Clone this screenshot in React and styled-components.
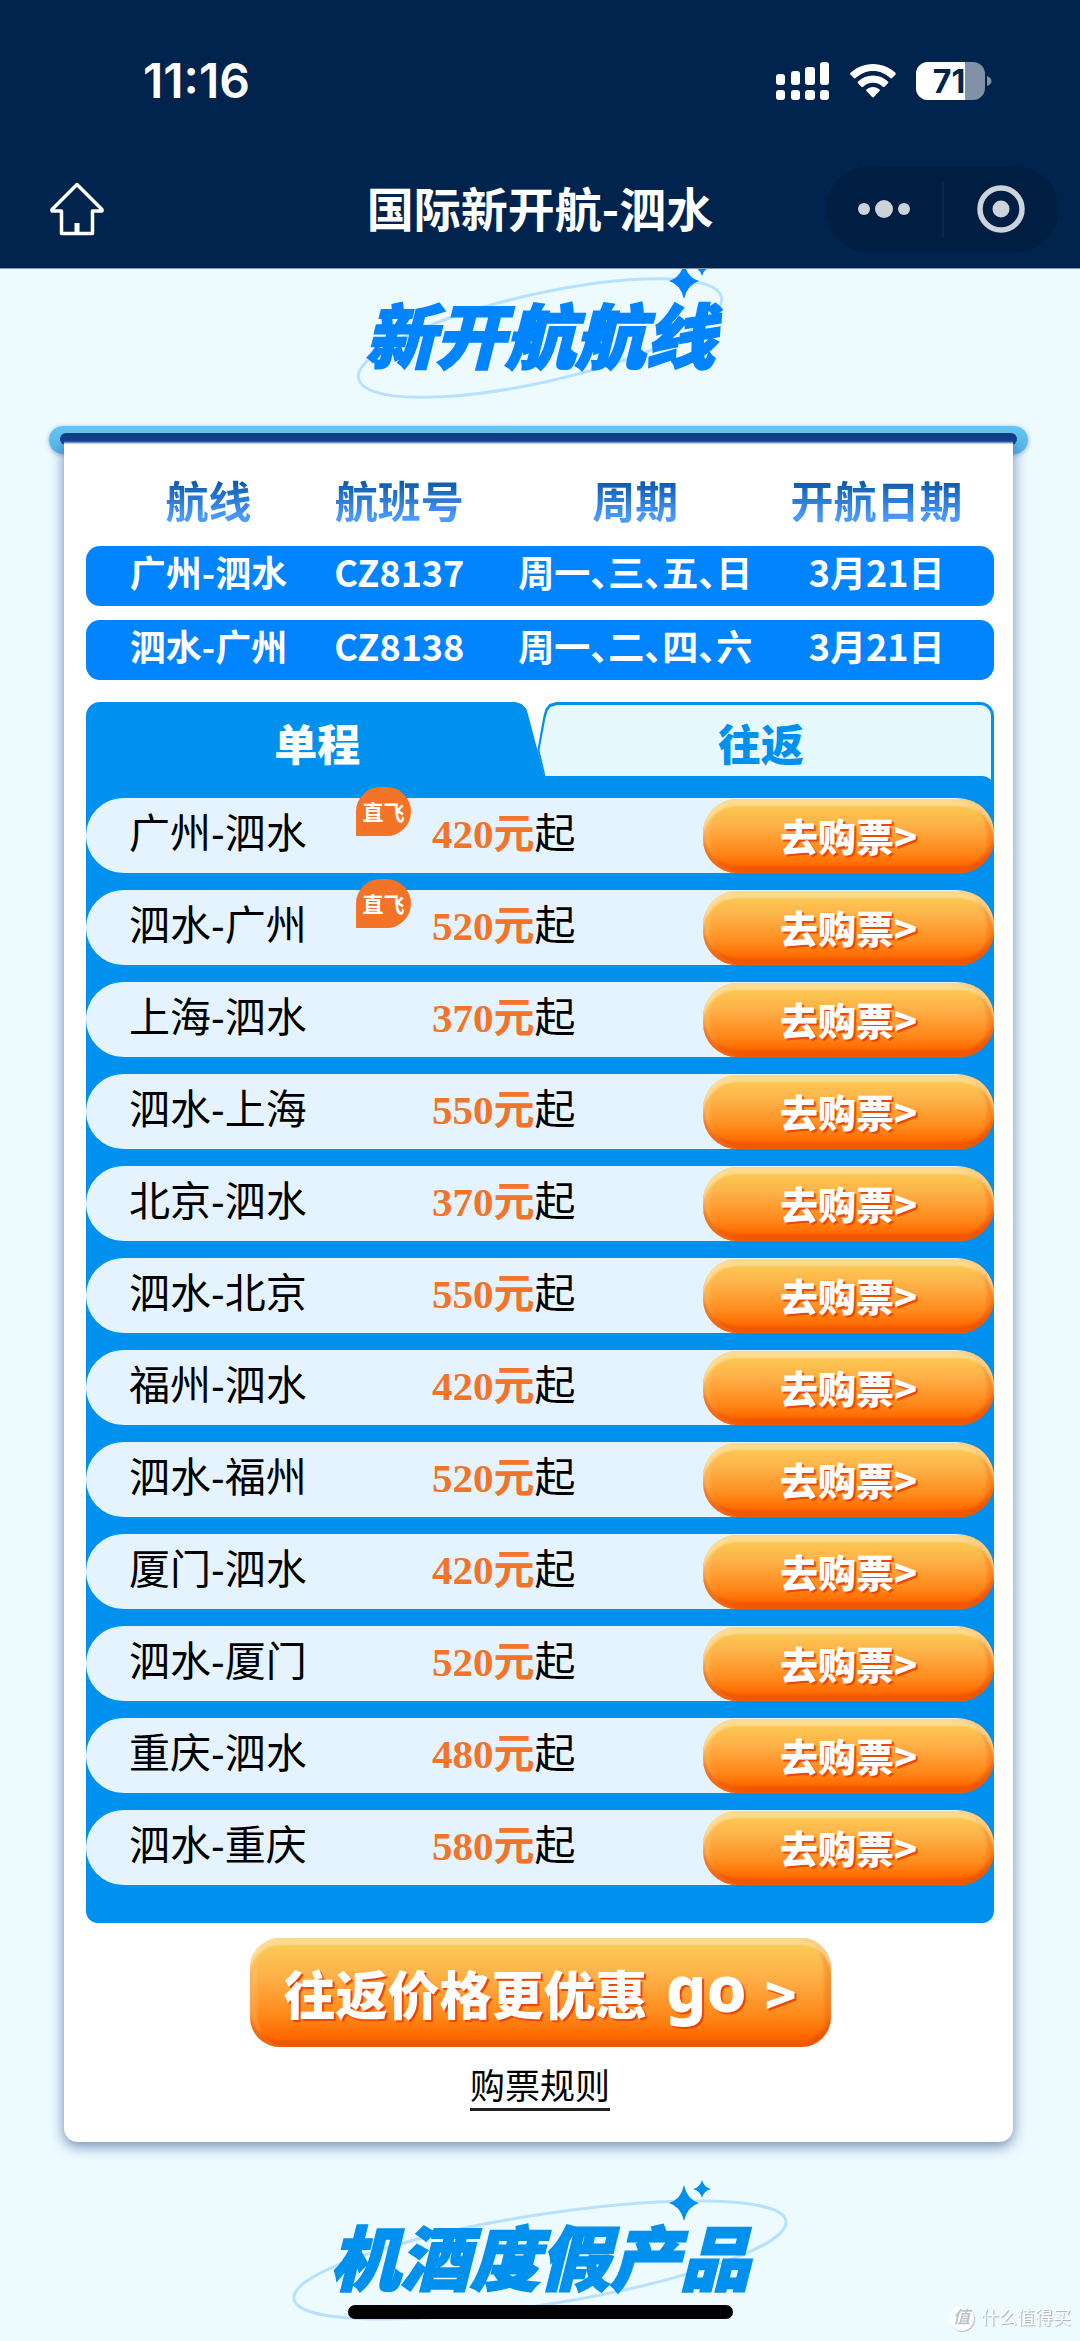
import React, {useState} from 'react';
import styled, {createGlobalStyle} from 'styled-components';

const GlobalStyle = createGlobalStyle`
  * {
    box-sizing: border-box;
  }
  body {
    margin: 0;
    background: #edfbff;
    font-family: "Liberation Sans", "Noto Sans CJK SC", sans-serif;
    color: #000;
  }
  button {
    border: 0;
    padding: 0;
    background: none;
    font-family: inherit;
    cursor: pointer;
  }
`;

const Header = styled.header`
  background: #00244d;
  color: #fff;
  border-bottom: 1px solid #8595ad;
`;

const StatusBar = styled.div`
  display: flex;
  align-items: center;
  justify-content: space-between;
  height: 161px;
  padding: 0 88px 0 143px;
`;

const Clock = styled.time`
  font: 600 48px/56px Inter, sans-serif;
`;

const StatusIcons = styled.div`
  display: flex;
  align-items: center;
  gap: 20px;
`;

const NavBar = styled.nav`
  display: grid;
  grid-template-columns: 1fr auto 1fr;
  align-items: center;
  height: 107px;
  padding: 0 20px 12px;
`;

const PageTitle = styled.h1`
  margin: 0;
  padding-bottom: 4px;
  font: 700 47px/60px "Noto Sans CJK SC", sans-serif;
`;

const HomeButton = styled.button`
  justify-self: start;
  display: flex;
  margin-left: 29px;
  color: #fff;
`;

const Capsule = styled.div`
  justify-self: end;
  display: flex;
  align-items: center;
  width: 235px;
  height: 88px;
  border-radius: 44px;
  background: #001e42;
  border: 1px solid #03264d;
  button {
    flex: 1;
    display: flex;
    justify-content: center;
  }
  button + button {
    border-left: 2px solid #08284f;
    height: 56px;
    align-items: center;
  }
`;

const Heading = styled.div`
  display: flex;
  justify-content: center;
  overflow: hidden;
  padding: ${p => p.$top}px 0 ${p => p.$bottom}px;
`;

const HeadingText = styled.h2`
  position: relative;
  isolation: isolate;
  margin: 0;
  padding-bottom: 6px;
  font: italic 900 70px/64px "Noto Sans CJK SC", sans-serif;
  color: ${p => p.$color};
  -webkit-text-stroke: 2px ${p => p.$color};
`;

const HeadingArt = styled.svg`
  position: absolute;
  z-index: -1;
  top: 50%;
  left: 50%;
  transform: translate(-50%, -50%);
`;

/* the bar the card hangs from */
const Roller = styled.div`
  margin: 0 52px 0 49px;
  height: 28px;
  padding: 7px 11px;
  border-radius: 14px;
  background: linear-gradient(#62c4f6, #58b4e8);
  box-shadow: 0 1px 4px rgba(60, 90, 180, 0.5);
  &::before {
    content: "";
    display: block;
    height: 12px;
    border-radius: 6px;
    background: linear-gradient(#0f3c7c, #15429a);
  }
`;

const Card = styled.main`
  position: relative;
  margin: -14px 67px 0 64px;
  padding: 0 19px 31px 22px;
  background: #fff;
  border-radius: 0 0 14px 14px;
  box-shadow: 0 4px 14px rgba(40, 70, 140, 0.65);
  clip-path: inset(0 -30px -30px -30px);
  &::before {
    content: "";
    position: absolute;
    inset: 0 0 auto;
    height: 4px;
    background: linear-gradient(#15429a 30%, rgba(160, 170, 210, 0.2));
  }
`;

const Schedule = styled.table`
  width: 100%;
  table-layout: fixed;
  border-collapse: separate;
  border-spacing: 0 14px;
  text-align: center;
  white-space: nowrap;
  font-family: "Noto Sans CJK SC", sans-serif;
  font-feature-settings: "halt";
  th, td {
    padding: 0;
  }
  th:first-child, td:first-child {
    width: 25%;
    padding-left: 18px;
  }
  th:nth-child(2) {
    width: 19%;
  }
  th:nth-child(3) {
    width: 33%;
  }
  th:last-child, td:last-child {
    padding-right: 26px;
  }
`;

const ScheduleHead = styled.th`
  height: 78px;
  font-size: 43px;
  line-height: 66px;
  font-weight: 700;
  vertical-align: bottom;
  span {
    background: linear-gradient(#0a58a8 20%, #4a9aff 80%);
    background-clip: text;
    color: transparent;
  }
`;

const ScheduleCell = styled.td`
  height: 60px;
  background: #0084ff;
  color: #fff;
  font-size: 36px;
  line-height: 50px;
  font-weight: 700;
  vertical-align: top;
  &:first-child {
    border-radius: 14px 0 0 14px;
  }
  &:last-child {
    border-radius: 0 14px 14px 0;
  }
`;

const Tabs = styled.div`
  display: flex;
  margin: 8px 0 -12px;
`;

const Tab = styled.button`
  position: relative;
  isolation: isolate;
  flex: 461 1 0;
  height: 86px;
  padding: 0 0 6px 4px;
  font: 900 43px/60px "Noto Sans CJK SC", sans-serif;
  color: #fff;
  &::before {
    content: "";
    position: absolute;
    z-index: -1;
    inset: 0;
    background: #0090ed;
    border-top-left-radius: 14px;
    clip-path: polygon(
      0 0, calc(100% - 29px) 0, calc(100% - 23px) 2px, calc(100% - 18px) 7px,
      calc(100% - 16px) 14px, calc(100% - 7px) 48px, 100% 75px, 100% 100%, 0 100%
    );
  }
`;

const BackTab = styled(Tab)`
  flex-grow: 453;
  margin-left: -7px;
  padding: 0 10px 6px 0;
  color: #0090ed;
  &::before, &::after {
    content: "";
    position: absolute;
    z-index: -1;
    inset: 0;
    border-radius: 0 14px 0 0;
    clip-path: polygon(
      0 48px, 6px 14px, 8px 7px, 12px 2px, 19px 0, 100% 0, 100% 100%, 7px 100%, 7px 76px
    );
  }
  &::after {
    inset: 3px 3px 0 2px;
    border-radius: 0 11px 0 0;
    background: #e5f9ff;
    clip-path: polygon(
      0 45px, 6px 13px, 8px 6px, 11px 2px, 18px 0, 100% 0, 100% 100%, 6px 100%, 6px 71px
    );
  }
`;

const FareList = styled.ul`
  position: relative;
  display: grid;
  gap: 17px;
  margin: 0;
  padding: 22px 0 38px;
  list-style: none;
  background: #0090ed;
  border-radius: 0 12px 12px 12px;
`;

const Fare = styled.li`
  position: relative;
  display: grid;
  grid-template-columns: 303px 1fr 291px;
  align-items: center;
  height: 75px;
  padding-left: 43px;
  border-radius: 38px;
  background: #e5f3fe;
  font-size: 41px;
  line-height: 60px;
  white-space: nowrap;
`;

const Route = styled.span`
  padding-bottom: 4px;
`;

const Price = styled.span`
  padding-bottom: 4px;
  b {
    font-family: "Liberation Serif", "Noto Sans CJK SC", serif;
    color: #f37328;
  }
`;

const DirectBadge = styled.span`
  position: absolute;
  top: -11px;
  left: 270px;
  width: 55px;
  height: 49px;
  border-radius: 28px 28px 28px 0;
  background: #f37328;
  color: #fff;
  font-size: 21px;
  line-height: 52px;
  font-weight: 700;
  text-align: center;
`;

const OrangeButton = styled.button`
  color: #fff;
  font-family: "Noto Sans CJK SC", sans-serif;
  font-weight: 900;
  text-shadow: 2px 2px 1px #ee4400;
  background: linear-gradient(#fcc752 10%, #fdb148 35%, #ff8a1c 70%, #ff6a00 90%);
  box-shadow:
    inset 0 7px 2px rgba(255, 232, 184, 0.6),
    inset 0 -7px 3px rgba(224, 66, 0, 0.45),
    inset 7px 0 3px rgba(255, 205, 130, 0.3),
    inset -7px 0 3px rgba(236, 90, 0, 0.3);
`;

const BuyButton = styled(OrangeButton)`
  height: 74px;
  border-radius: 34px;
  font-size: 38px;
  line-height: 60px;
  padding-bottom: 2px;
`;

const ReturnButton = styled(OrangeButton)`
  display: flex;
  align-items: center;
  justify-content: center;
  gap: 18px;
  width: 581px;
  height: 109px;
  margin: 15px auto 0;
  border-radius: 30px;
  font-size: 52px;
  line-height: 72px;
  em {
    font: 800 64px/72px "Noto Sans", sans-serif;
    padding-bottom: 10px;
  }
`;

const Rules = styled.a`
  display: block;
  width: fit-content;
  margin: 19px auto 0;
  border-bottom: 3px solid #222;
  color: #000;
  font-size: 35px;
  line-height: 42px;
  text-decoration: none;
`;

const HomeIndicator = styled.div`
  position: fixed;
  left: 50%;
  bottom: 22px;
  width: 385px;
  height: 14px;
  margin-left: -192px;
  border-radius: 7px;
  background: #000;
`;

const Watermark = styled.div`
  position: fixed;
  right: 9px;
  bottom: 10px;
  display: flex;
  align-items: center;
  gap: 7px;
  color: #fff;
  font-size: 18px;
  line-height: 26px;
  text-shadow: 1px 1px 1px #a5afb3;
  b {
    width: 25px;
    height: 25px;
    border-radius: 50%;
    background: #fff;
    box-shadow: 1px 1px 1px #b5bfc3;
    color: #bcc6ca;
    font-size: 17px;
    line-height: 24px;
    font-style: italic;
    text-align: center;
    text-shadow: none;
  }
`;

const flights = [
    ['广州-泗水', 'CZ8137', '周一、三、五、日', '3月21日'],
    ['泗水-广州', 'CZ8138', '周一、二、四、六', '3月21日'],
];

const fares = [
    {route: '广州-泗水', price: 420, direct: true},
    {route: '泗水-广州', price: 520, direct: true},
    {route: '上海-泗水', price: 370},
    {route: '泗水-上海', price: 550},
    {route: '北京-泗水', price: 370},
    {route: '泗水-北京', price: 550},
    {route: '福州-泗水', price: 420},
    {route: '泗水-福州', price: 520},
    {route: '厦门-泗水', price: 420},
    {route: '泗水-厦门', price: 520},
    {route: '重庆-泗水', price: 480},
    {route: '泗水-重庆', price: 580},
];

const SignalIcon = () => (
    <svg width="54" height="38" viewBox="0 0 54 38" fill="#fff">
        <rect x="0" y="12" width="9" height="11" rx="3"/>
        <rect x="15" y="9" width="9" height="14" rx="3"/>
        <rect x="29" y="5" width="10" height="18" rx="3"/>
        <rect x="44" y="0" width="9" height="23" rx="3"/>
        <rect x="0" y="28" width="9" height="10" rx="3"/>
        <rect x="15" y="28" width="9" height="10" rx="3"/>
        <rect x="29" y="28" width="10" height="10" rx="3"/>
        <rect x="44" y="28" width="9" height="10" rx="3"/>
    </svg>
);

const WifiIcon = () => (
    <svg width="46" height="34" viewBox="0 0 46 34" fill="#fff">
        <path d="M23 0C14 0 6 3.500 .6 8.800a1.300 1.300 0 0 0 0 1.900l3.300 3.400c.5.500 1.300.5 1.800 0C10.300 9.700 16.300 7 23 7s12.700 2.700 17.300 7.100c.5.500 1.300.5 1.800 0l3.300-3.400c.5-.5.5-1.400 0-1.900C40 3.500 32 0 23 0z"/>
        <path d="M23 11.500c-5.800 0-11 2.300-14.900 6-.5.500-.5 1.300 0 1.800l3.300 3.400c.5.500 1.300.5 1.800 0C15.800 20.200 19.200 18.700 23 18.700s7.200 1.500 9.800 4c.5.500 1.300.5 1.800 0l3.300-3.400c.5-.5.500-1.300 0-1.800-3.900-3.700-9.100-6-14.900-6z"/>
        <path d="M23 23c-2.500 0-4.800.9-6.500 2.400-.5.500-.5 1.200 0 1.700l5.600 6c.5.600 1.300.6 1.800 0l5.600-6c.5-.5.5-1.200 0-1.700C27.800 23.900 25.500 23 23 23z"/>
    </svg>
);

const BatteryIcon = () => (
    <svg width="76" height="38" viewBox="0 0 76 38">
        <clipPath id="battery"><rect width="69" height="38" rx="12"/></clipPath>
        <g clipPath="url(#battery)">
            <rect width="69" height="38" fill="#8091a8"/>
            <rect width="49" height="38" fill="#fff"/>
        </g>
        <path d="M71 14c3 1 4.500 3 4.500 5s-1.500 4-4.500 5z" fill="#8091a8"/>
        <text x="33" y="31" textAnchor="middle" fontFamily="Inter" fontWeight="700" fontSize="32" fill="#00244d">71</text>
    </svg>
);

const HomeIcon = () => (
    <svg width="56" height="54" viewBox="0 0 56 54" fill="none" stroke="#fff" strokeWidth="3.500" strokeLinejoin="round">
        <path d="M28 2.500 3 27.500v1.500h9.500v22.500h31V29H53v-1.500z"/>
        <path d="M28 41v10" strokeWidth="5"/>
    </svg>
);

const sparkle = (x, y, w, h) =>
    `M${x} ${y - h}Q${x + w * 0.2} ${y - h * 0.2} ${x + w} ${y}Q${x + w * 0.2} ${y + h * 0.2} ${x} ${y + h}Q${x - w * 0.2} ${y + h * 0.2} ${x - w} ${y}Q${x - w * 0.2} ${y - h * 0.2} ${x} ${y - h}z`;

const SectionHeading = ({children, color, top, bottom, rx, ry, tilt}) => (
    <Heading $top={top} $bottom={bottom}>
        <HeadingText $color={color}>
            <HeadingArt width="520" height="176" viewBox="-260 -90 520 176" fill={color}>
                <ellipse rx={rx} ry={ry} transform={`rotate(${-tilt})`} fill="none" stroke="#b9e1fd" strokeWidth="3"/>
                <path d={sparkle(144, -57, 15, 18)}/>
                <path d={sparkle(162, -71, 9, 9)}/>
            </HeadingArt>
            {children}
        </HeadingText>
    </Heading>
);

export default function App() {
    const [trip, setTrip] = useState('single');

    return <>
        <GlobalStyle/>
        <Header>
            <StatusBar>
                <Clock>11:16</Clock>
                <StatusIcons>
                    <SignalIcon/>
                    <WifiIcon/>
                    <BatteryIcon/>
                </StatusIcons>
            </StatusBar>
            <NavBar>
                <HomeButton aria-label="首页"><HomeIcon/></HomeButton>
                <PageTitle>国际新开航-泗水</PageTitle>
                <Capsule>
                    <button aria-label="更多">
                        <svg width="52" height="20" viewBox="0 0 52 20" fill="#ccd3db">
                            <circle cx="6" cy="10" r="6"/>
                            <circle cx="26" cy="10" r="9"/>
                            <circle cx="46" cy="10" r="6"/>
                        </svg>
                    </button>
                    <button aria-label="关闭">
                        <svg width="48" height="48" viewBox="0 0 48 48">
                            <circle cx="24" cy="24" r="21" fill="none" stroke="#ccd3db" strokeWidth="5.500"/>
                            <circle cx="24" cy="24" r="8.500" fill="#ccd3db"/>
                        </svg>
                    </button>
                </Capsule>
            </NavBar>
        </Header>

        <SectionHeading color="#0084ff" top={32} bottom={55} rx={186} ry={44} tilt={12.7}>新开航航线</SectionHeading>

        <Roller/>
        <Card>
            <Schedule>
                <thead>
                    <tr>
                        {['航线', '航班号', '周期', '开航日期'].map(name =>
                            <ScheduleHead key={name} scope="col"><span>{name}</span></ScheduleHead>
                        )}
                    </tr>
                </thead>
                <tbody>
                    {flights.map(flight =>
                        <tr key={flight[1]}>
                            {flight.map(value => <ScheduleCell key={value}>{value}</ScheduleCell>)}
                        </tr>
                    )}
                </tbody>
            </Schedule>

            <Tabs role="tablist">
                <Tab role="tab" aria-selected={trip === 'single'} onClick={() => setTrip('single')}>单程</Tab>
                <BackTab role="tab" aria-selected={trip === 'return'} onClick={() => setTrip('return')}>往返</BackTab>
            </Tabs>
            <FareList>
                {fares.map(({route, price, direct}) =>
                    <Fare key={route}>
                        <Route>{route}</Route>
                        {direct && <DirectBadge>直飞</DirectBadge>}
                        <Price><b>{price}元</b>起</Price>
                        <BuyButton>去购票&gt;</BuyButton>
                    </Fare>
                )}
            </FareList>

            <ReturnButton>往返价格更优惠<em>go</em><span>&gt;</span></ReturnButton>
            <Rules href="#rules">购票规则</Rules>
        </Card>

        <SectionHeading color="#0090ed" top={81} bottom={48} rx={249} ry={45} tilt={9}>机酒度假产品</SectionHeading>

        <HomeIndicator/>
        <Watermark><b>值</b>什么值得买</Watermark>
    </>;
}
